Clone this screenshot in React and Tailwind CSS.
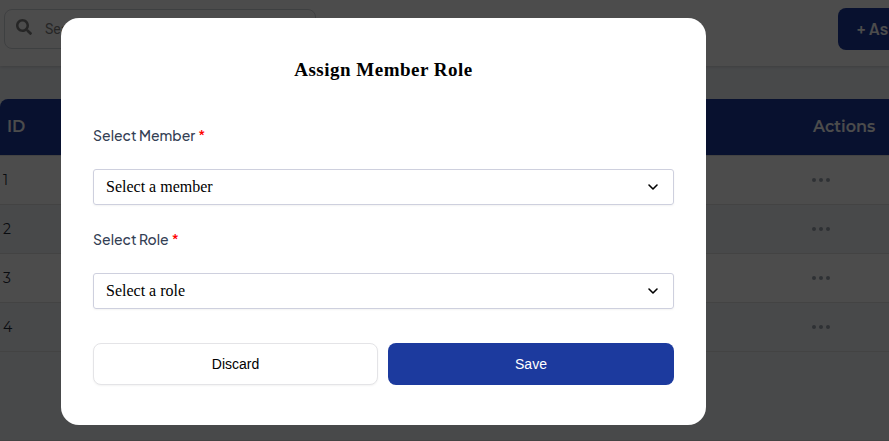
import React from "react";
import { FaSearch } from "react-icons/fa";

function MoreDots() {
  return (
    <svg width="18" height="4" viewBox="0 0 18 4" className="fill-[#9ca3af]">
      <circle cx="2" cy="2" r="2" />
      <circle cx="9" cy="2" r="2" />
      <circle cx="16" cy="2" r="2" />
    </svg>
  );
}

const rows = [
  { id: 1, bg: "bg-white" },
  { id: 2, bg: "bg-[#f1f5f9]" },
  { id: 3, bg: "bg-white" },
  { id: 4, bg: "bg-[#f1f5f9]" },
];

function RolesPage() {
  return (
    <div className="flex h-[441px] w-[889px] flex-col overflow-hidden border-b border-[#e0e0e0] bg-[#f1f5f9]">
      <header className="flex h-[66px] shrink-0 items-start justify-between bg-white pl-1 shadow-[0_1px_3px_rgba(0,0,0,0.15)]">
        <div className="mt-[9px] flex h-10 w-[312px] items-center rounded-lg border border-[#d1d5db] pl-[11px]">
          <FaSearch className="-mt-1 size-4 text-[#808080]" />
          <span className="ml-[13px] font-[Roboto] text-sm text-[#808080]">Search</span>
        </div>
        <button className="mt-2 h-[42px] w-[51px] overflow-hidden rounded-l-lg bg-[#1c3a9e] pl-[19px] text-left font-['Barlow','Roboto',sans-serif] text-[17px] font-semibold whitespace-nowrap text-white">
          + As
        </button>
      </header>
      <div className="mt-[33px]">
        <div className="flex h-14 items-center justify-between rounded-tl-lg bg-[#1c3a9e] pr-[13px] pl-[7px] font-['Montserrat','Inter',sans-serif] text-base font-semibold text-white">
          <span>ID</span>
          <span className="w-[63px]">Actions</span>
        </div>
        <div className="border-t border-[#e0e0e0]">
          {rows.map((row) => (
            <div
              key={row.id}
              className={"flex h-[49px] items-center justify-between border-b border-[#e0e0e0] pr-[59px] pl-[3px] " + row.bg}
            >
              <span className="font-['Montserrat','Inter',sans-serif] text-sm text-[#1f2937]">{row.id}</span>
              <MoreDots />
            </div>
          ))}
        </div>
      </div>
    </div>
  );
}

function SelectField({ label, placeholder }) {
  return (
    <div className="flex flex-col">
      <label className="flex h-5 items-center gap-[3px] pb-0.5 font-['Plus_Jakarta_Sans','Inter',sans-serif] text-sm font-medium whitespace-nowrap text-[#344054]">
        <span>{label}</span>
        <span className="text-[#ff0000]">*</span>
      </label>
      <button className="mt-[23px] flex h-9 items-center justify-between rounded-[3px] border border-[#ced0de] pr-[14px] pl-3 font-['Liberation_Serif',serif] text-base text-black shadow-[0_1px_2px_rgba(0,0,0,0.05)]">
        <span>{placeholder}</span>
        <svg width="12" height="8" viewBox="0 0 12 8" fill="none" className="stroke-black" strokeWidth="1.6" strokeLinecap="round" strokeLinejoin="round">
          <path d="M2 2l4 4 4-4" />
        </svg>
      </button>
    </div>
  );
}

export default function App() {
  return (
    <div className="relative h-[441px] w-[889px] overflow-hidden">
      <RolesPage />
      <div className="absolute inset-0 bg-black/70 pt-[18px] pl-[61px]">
        <div className="flex h-[407px] w-[645px] flex-col rounded-[18px] bg-white px-8 pt-[38px]">
          <h2 className="h-7 text-center font-['Liberation_Serif',serif] text-[19px] leading-7 font-bold tracking-[0.5px] text-black">
            Assign Member Role
          </h2>
          <div className="mt-[42px] flex flex-col gap-[25px]">
            <SelectField label="Select Member" placeholder="Select a member" />
            <SelectField label="Select Role" placeholder="Select a role" />
          </div>
          <div className="mt-[34px] grid h-[42px] grid-cols-[285px_286px] gap-[10px] font-['Liberation_Sans',sans-serif] text-sm">
            <button className="rounded-lg border border-[#e4e4e7] bg-white text-black shadow-[0_1px_2px_rgba(0,0,0,0.05)]">
              Discard
            </button>
            <button className="rounded-lg bg-[#1c3a9e] text-white">Save</button>
          </div>
        </div>
      </div>
    </div>
  );
}
